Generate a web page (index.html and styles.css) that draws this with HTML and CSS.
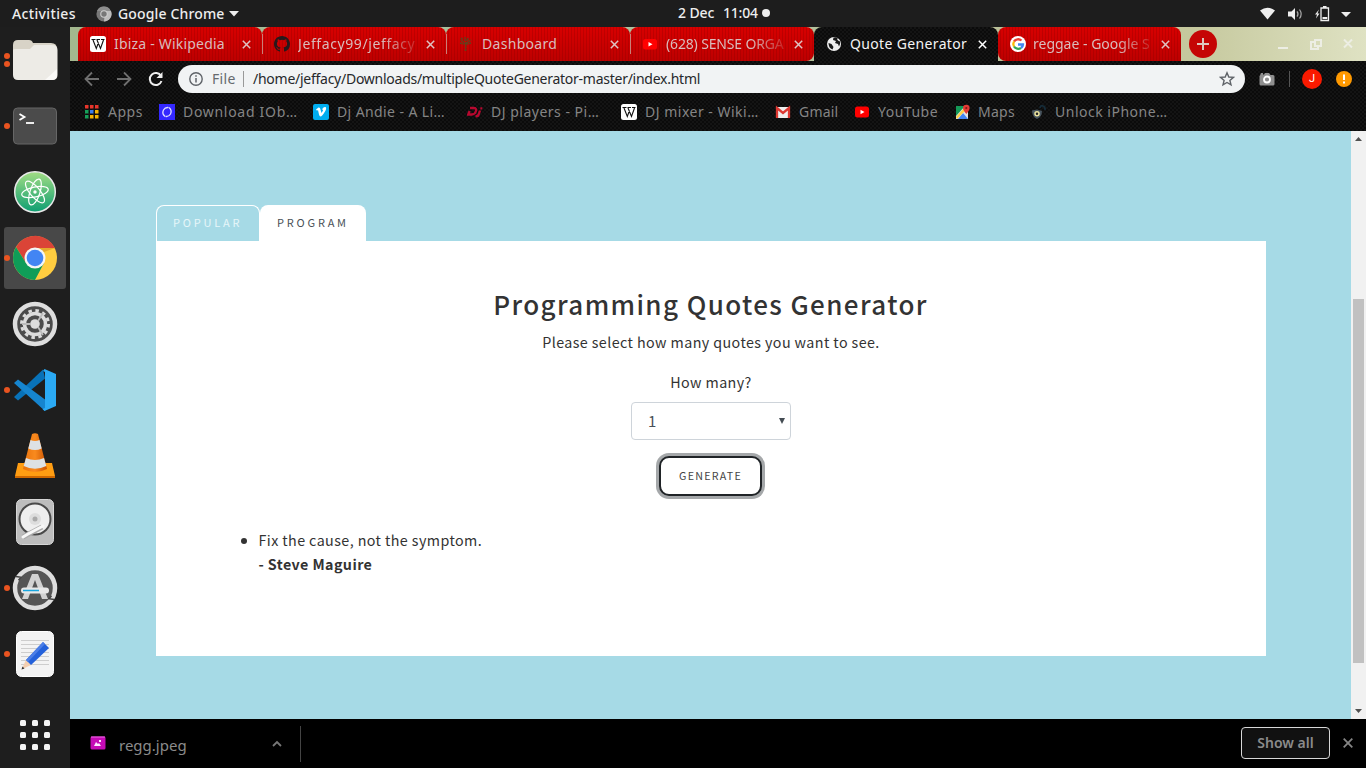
FILE: index.html
```html
<!DOCTYPE html>
<html lang="en">
<head>
<meta charset="utf-8">
<title>Quote Generator</title>
<link rel="stylesheet" href="styles.css">
</head>
<body>
<header class="topbar">
  <span class="activities">Activities</span>
  <svg class="app-logo" width="16" height="16" viewBox="0 0 16 16"><circle cx="8" cy="8" r="7.6" fill="#777"/><path d="M1 5a7.6 7.6 0 0 1 13.8 0H8z" fill="#8d8d8d"/><path d="M8 15.5A7.6 7.6 0 0 0 15 5H9z" fill="#bdbdbd"/><circle cx="8" cy="8" r="3.8" fill="#ccc"/><circle cx="8" cy="8" r="2.7" fill="#777"/></svg>
  <span class="app-name">Google Chrome</span>
  <svg class="app-caret" width="10" height="6"><path d="M0 0h10L5 5.5z" fill="#eee"/></svg>
  <span class="clock"><span class="date">2 Dec</span><span class="time">11:04</span><i class="notice"></i></span>
  <svg class="tray" width="94" height="18" viewBox="0 0 94 18" fill="#eee"><path d="M1 5.500Q8.500 0 16 5.500L8.500 14.500z"/><path d="M29 6.500h3.500L36 3v12l-3.500-3.500H29z"/><path d="M38 6.300q2 2.700 0 5.400M40.500 4.500q3.300 4.500 0 9" fill="none" stroke="#aaa" stroke-width="1.200"/><path d="M60 4.500l-4 5h2l-1 4 3.500-5h-2z"/><path d="M62 3h7.500v12.500H62z" fill="none" stroke="#eee" stroke-width="1.300"/><path d="M64 1h3.500v2H64zM63.500 12h4.800v2h-4.800zM82 7h10l-5 5z"/></svg>
</header>
<main class="desktop">
  <nav class="dock">
    <div class="dock-item"><i class="run-dots"><b></b><b></b></i>
      <svg width="46" height="42" viewBox="0 0 46 42"><path d="M1 6q0-5 5-5h11q3 0 4 3h18q6 0 6 6v20H1z" fill="#d8d3c7"/><path d="M1 11q0-1 3-1h14l4-4h18q5.500 0 5.500 5v25q0 5-5 5H6q-5 0-5-5z" fill="#edebe6"/><path d="M45 30v6q0 5-6 5h-6z" fill="#faf9f7"/></svg></div>
    <div class="dock-item"><i class="run-dots"><b></b></i>
      <svg width="44" height="38" viewBox="0 0 44 38"><rect x=".5" y="1" width="43" height="36" rx="4" fill="#4b4b4b" stroke="#666"/><path d="M6.500 7l5 3-5 3" fill="none" stroke="#fff" stroke-width="1.800"/><path d="M13 16h8" stroke="#fff" stroke-width="1.800"/></svg></div>
    <div class="dock-item">
      <svg width="44" height="44" viewBox="0 0 44 44"><defs><linearGradient id="atom" x2="0" y2="1"><stop stop-color="#a2dd84"/><stop offset="1" stop-color="#0d9e72"/></linearGradient></defs><circle cx="22" cy="22" r="20.300" fill="url(#atom)" stroke="#e8e8e8" stroke-width="1.500"/><g fill="none" stroke="#fff" stroke-width="1.200"><ellipse cx="22" cy="22" rx="13.500" ry="5" transform="rotate(-12 22 22)"/><ellipse cx="22" cy="22" rx="13.500" ry="5" transform="rotate(50 22 22)"/><ellipse cx="22" cy="22" rx="13.500" ry="5" transform="rotate(108 22 22)"/></g><circle cx="22" cy="22" r="1.700" fill="#fff"/></svg></div>
    <div class="dock-item focused"><i class="run-dots"><b></b></i>
      <svg width="46" height="46" viewBox="0 0 46 46"><circle cx="23" cy="23" r="22" fill="#ffcd40"/><path d="M4 12A22 22 0 0 1 43 13H23L14 28z" fill="#db4437"/><path d="M4 12A22 22 0 0 0 23 45l9-17-9 5-9-5z" fill="#0f9d58"/><path d="M23 13h20l-11 4z" fill="#e5a92d"/><circle cx="23" cy="23" r="10.500" fill="#f5f5f5"/><circle cx="23" cy="23" r="8.300" fill="#4285f4"/></svg></div>
    <div class="dock-item">
      <svg width="46" height="46" viewBox="0 0 46 46"><circle cx="23" cy="23" r="20" fill="#4b4b4b" stroke="#dedede" stroke-width="4.500"/><circle cx="23" cy="23" r="13.500" fill="none" stroke="#dcdcdc" stroke-width="3" stroke-dasharray="3.500 3.568"/><circle cx="23" cy="23" r="10.500" fill="none" stroke="#dcdcdc" stroke-width="3.500"/><circle cx="23" cy="23" r="4.800" fill="#dcdcdc"/><path d="M10 23h9M26 20l5-8M26 26l5 8" stroke="#bbb" stroke-width="1.800"/></svg></div>
    <div class="dock-item"><i class="run-dots"><b></b></i>
      <svg width="44" height="44" viewBox="0 0 44 44"><path d="M5 32.500L1 29 30 1.500l2 9z" fill="#0872b8"/><path d="M1 15l4-3.500L34 33l-2 10z" fill="#1685cf"/><path d="M31.500 1L43 6v32l-11.500 5-2-2 2.500-1V4l-2-1z" fill="#2baaf4"/></svg></div>
    <div class="dock-item">
      <svg width="42" height="46" viewBox="0 0 42 46"><defs><linearGradient id="cone"><stop stop-color="#e8720c"/><stop offset=".5" stop-color="#f98a1e"/><stop offset="1" stop-color="#c95100"/></linearGradient></defs><path d="M4 30h34l3 13v2H1v-2z" fill="#ff9d12"/><path d="M1 43h40v2H1z" fill="#cf6800"/><path d="M18 1q3-1.500 6 0l9 35q-12 6-24 0z" fill="url(#cone)"/><path d="M16.500 7q4.500 2 9 0l2.200 8.500q-6.700 3-13.400 0zM12 25q9 4 18 0l2.300 8q-11.300 5.500-22.600 0z" fill="#dde1e4"/></svg></div>
    <div class="dock-item">
      <svg width="38" height="46" viewBox="0 0 38 46"><rect x=".5" y=".5" width="37" height="45" rx="5" fill="#bdbdbd" stroke="#d6d6d6"/><circle cx="19" cy="20" r="15.500" fill="#eee" stroke="#4a4a4a" stroke-width="2"/><circle cx="19" cy="20" r="6" fill="#ddd"/><circle cx="19" cy="20" r="2.500" fill="#aaa"/><path d="M7 38l19-10" stroke="#aaa" stroke-width="5"/><path d="M7 38l5-3 15-8" stroke="#f7f7f7" stroke-width="3" fill="none" stroke-linecap="round"/></svg></div>
    <div class="dock-item"><i class="run-dots"><b></b></i>
      <svg width="46" height="46" viewBox="0 0 46 46"><circle cx="23" cy="23" r="20" fill="#555" stroke="#dedede" stroke-width="4.500"/><path d="M4 11.500l5 .8-2.500 3M42 34.500l-5-.8 2.500-3" stroke="#444" stroke-width="1.500" fill="none"/><path d="M10 34L20 9h6l10 25h-6l-7-19-7 19z" fill="#d2d2d2"/><rect x="9" y="22.500" width="28" height="6" rx="3" fill="#e8e8e8"/><path d="M11 25.500h16" stroke="#19a6df" stroke-width="1.500"/></svg></div>
    <div class="dock-item"><i class="run-dots"><b></b></i>
      <svg width="38" height="46" viewBox="0 0 38 46"><rect x=".5" y=".5" width="37" height="45" rx="5" fill="#f3f3f3" stroke="#fff"/><path d="M5 9.500h28M5 13.500h28M5 17.500h28M5 21.500h28M5 25.500h28M5 29.500h28M5 33.500h28" stroke="#cdcdcd"/><path d="M5.500 38.500L10 29l5 5z" fill="#f3ceb0"/><path d="M5.500 38.500l1-3 2 2z" fill="#333"/><path d="M10 29l17-18 6 6-18 17z" fill="#2461da"/><path d="M10 29l17-18 2 2-17 18z" fill="#4b7ee7"/></svg></div>
    <div class="dock-apps"><b></b><b></b><b></b><b></b><b></b><b></b><b></b><b></b><b></b></div>
  </nav>
  <section class="browser">
    <div class="tabstrip">
      <div class="tab"><svg class="fav" viewBox="0 0 16 16"><rect width="16" height="16" rx="2.500" fill="#fff"/><path d="M1.500 3.500h4M6.500 3.500h3.500M11 3.500h3.500M3 4l3.300 8.500L8.500 6.500M7 4l3.500 8.500L13.500 4" fill="none" stroke="#111" stroke-width="1.100"/></svg><span class="title t1">Ibiza - Wikipedia</span><svg class="x" viewBox="0 0 9 9"><path d="M.8.8l7.400 7.400M8.200.8L.8 8.200"/></svg></div>
      <div class="tab"><svg class="fav" viewBox="0 0 16 16"><path fill="#26191b" d="M8 0C3.580 0 0 3.580 0 8c0 3.540 2.290 6.530 5.470 7.590.4.070.55-.17.55-.38v-1.490c-2.230.49-2.700-.95-2.700-.95-.36-.92-.89-1.170-.89-1.170-.73-.5.060-.49.060-.49.800.060 1.230.83 1.230.83.720 1.220 1.870.87 2.330.66.070-.52.280-.87.510-1.070-1.780-.2-3.640-.89-3.640-3.950 0-.87.310-1.590.82-2.150-.08-.2-.36-1.020.08-2.120 0 0 .67-.21 2.200.82a7.600 7.600 0 0 1 4 0c1.530-1.040 2.200-.82 2.200-.82.440 1.100.160 1.920.080 2.120.51.560.82 1.270.82 2.150 0 3.070-1.870 3.750-3.650 3.950.290.250.540.730.540 1.480v2.200c0 .21.150.46.550.38A8 8 0 0 0 16 8c0-4.420-3.580-8-8-8z"/></svg><span class="title fade t2">Jeffacy99/jeffacy</span><svg class="x" viewBox="0 0 9 9"><path d="M.8.8l7.400 7.400M8.200.8L.8 8.200"/></svg></div>
      <div class="tab"><svg class="fav" viewBox="0 0 16 16"><path d="M7.500 15l.5-9M8 8L3 4M8 7l5-3M7.500 5L7 1M2 7l4 1M13 7L9 8M3 2l2 2M10 2L9 5" stroke="#63401c" stroke-width="1.700" stroke-dasharray="2 .6" fill="none"/></svg><span class="title t3">Dashboard</span><svg class="x" viewBox="0 0 9 9"><path d="M.8.8l7.400 7.400M8.200.8L.8 8.200"/></svg></div>
      <div class="tab last-left"><svg class="fav" viewBox="0 0 16 16"><rect x="1" y="3" width="14" height="10.500" rx="2.500" fill="#f00"/><path d="M6.500 6v4.500l4-2.250z" fill="#fff"/></svg><span class="title fade t4">(628) SENSE ORGA</span><svg class="x" viewBox="0 0 9 9"><path d="M.8.8l7.400 7.400M8.200.8L.8 8.200"/></svg></div>
      <div class="tab active"><svg class="fav" viewBox="0 0 16 16"><circle cx="8" cy="8" r="7" fill="#eee"/><path d="M2.500 7l3 1 2 3-1 2.500q-4-1.500-4-6.500zM7.500 1.500L7 4l3 1-1 2 3 1 1 2.500q1.500-2 1-5l-2-1-1-1.500 1-1q-2-1.300-4-.5z" fill="#181818"/></svg><span class="title t5">Quote Generator</span><svg class="x" viewBox="0 0 9 9"><path d="M.8.8l7.400 7.400M8.200.8L.8 8.200"/></svg></div>
      <div class="tab only"><svg class="fav" viewBox="0 0 16 16"><circle cx="8" cy="8" r="8" fill="#fff"/><g fill="none" stroke-width="2.300"><path d="M11.500 4.500A5 5 0 0 0 4 5.500" stroke="#ea4335"/><path d="M4 5.500q-1.500 2.500 0 5" stroke="#fbbc05"/><path d="M4 10.500a5 5 0 0 0 7 1.500" stroke="#34a853"/><path d="M11 12q2-1.500 2-3.500H8" stroke="#4285f4"/></g></svg><span class="title fade t6">reggae - Google S</span><svg class="x" viewBox="0 0 9 9"><path d="M.8.8l7.400 7.400M8.200.8L.8 8.200"/></svg></div>
      <svg class="newtab" width="28" height="28" viewBox="0 0 28 28"><circle cx="14" cy="14" r="14" fill="#c50505"/><path d="M14 8v12M8 14h12" stroke="#ddc8c0" stroke-width="2"/></svg>
      <svg class="wincontrols" width="76" height="14" viewBox="0 0 76 14" fill="none" stroke="#edeee4" stroke-width="2"><path d="M0 11h10M36 5h-3v7h7v-3M37 3h6v6h-6zM66 2.500l8 8M74 2.500l-8 8"/></svg>
    </div>
    <div class="toolbar">
      <svg class="navicons" width="80" height="18" viewBox="0 0 80 18" fill="none" stroke="#6f6f6f" stroke-width="1.800"><path d="M15 9H2M8 2.500L1.500 9 8 15.500M33 9h13M40 2.500L46.500 9 40 15.500"/><path d="M77 6a6 6 0 1 0 .5 5" stroke="#eee" stroke-width="2"/><path d="M78.500 2v6h-6z" fill="#eee" stroke="none"/></svg>
      <div class="omnibox">
        <svg width="14" height="14" viewBox="0 0 14 14"><circle cx="7" cy="7" r="6.200" fill="none" stroke="#5f6368" stroke-width="1.400"/><path d="M7 6v4.500M7 3.300v1.500" stroke="#5f6368" stroke-width="1.500"/></svg>
        <span class="scheme">File</span><span class="url">/home/jeffacy/Downloads/multipleQuoteGenerator-master/index.html</span>
        <svg class="star" width="16" height="16" viewBox="0 0 16 16"><path d="M8 1.800l1.800 4.200 4.600.4-3.500 3 1.100 4.500L8 11.500l-4 2.400 1.100-4.500-3.500-3L6.200 6z" fill="none" stroke="#5f6368" stroke-width="1.400"/></svg>
      </div>
      <svg class="camera" width="16" height="14" viewBox="0 0 16 14"><path d="M1 3.500L2 1h2v1.500h1L6 1h4l1.500 2H14q1.500 0 1.500 1.500V12q0 1.500-1.500 1.500H2Q.5 13.500.5 12V4z" fill="#8f8f8f"/><circle cx="8" cy="7.500" r="3" fill="none" stroke="#fff" stroke-width="1.800"/></svg>
      <i class="rule"></i><span class="avatar">J</span>
      <svg class="warning" width="16" height="16" viewBox="0 0 16 16"><circle cx="8" cy="8" r="8" fill="#ff9900"/><path d="M8 3.500v5.500M8 10.500v2" stroke="#fff" stroke-width="2"/></svg>
    </div>
    <div class="bookmarks">
      <div class="bm b1"><svg viewBox="0 0 16 16"><path d="M1 1h3.500v3.500H1zM6 1h3.500v3.500H6zM11 1h3.500v3.500H11z" fill="#e8352b"/><path d="M1 6h3.500v3.500H1z" fill="#16a05a"/><path d="M6 6h3.500v3.500H6z" fill="#3b7ded"/><path d="M11 6h3.500v3.500H11z" fill="#f5b400"/><path d="M1 11h3.500v3.500H1z" fill="#16a05a"/><path d="M6 11h3.500v3.500H6zM11 11h3.500v3.500H11z" fill="#f5b400"/></svg><span>Apps</span></div>
      <div class="bm b2"><svg viewBox="0 0 16 16"><path d="M0 0h16v16H0z" fill="#3428ff"/><path d="M6.500 12.700Q2.500 10 4.500 6 6 3.300 9 3.500M9.500 3.300q4 2.700 2 6.700-1.500 2.700-4.500 2.500" fill="none" stroke="#ddf" stroke-width="1.300"/></svg><span>Download IOb…</span></div>
      <div class="bm b3"><svg viewBox="0 0 16 16"><rect width="16" height="16" rx="2" fill="#00adef"/><path d="M3 5.500l2.500-2q1.500-.5 2 2l1 3.500 1.500-2.500q.5-1-1-1 1-3 3.500-2.500 1.500 1-.5 4.500-3 5-4.500 5-1 0-1.500-2L5 6l-1 .7z" fill="#fff"/></svg><span>Dj Andie - A Li…</span></div>
      <div class="bm b4"><svg viewBox="0 0 16 16"><path d="M3 4h3.500q3.500 0 2.300 3.500-1 3-4 3H1.200L2.600 7M13 6.500l-1.300 4q-.7 2-3.200 1.700M13.300 4.300h2" fill="none" stroke="#b8082f" stroke-width="2.300"/></svg><span>DJ players - Pi…</span></div>
      <div class="bm b5"><svg viewBox="0 0 16 16"><rect width="16" height="16" rx="2.500" fill="#fff"/><path d="M1.500 3.500h4M6.500 3.500h3.500M11 3.500h3.500M3 4l3.300 8.500L8.500 6.500M7 4l3.500 8.500L13.500 4" fill="none" stroke="#111" stroke-width="1.100"/></svg><span>DJ mixer - Wiki…</span></div>
      <div class="bm b6"><svg viewBox="0 0 16 16"><path d="M1 3h14v11H1z" fill="#eee"/><path d="M2 14V4l6 5 6-5v10" fill="none" stroke="#dc3832" stroke-width="2.300"/></svg><span>Gmail</span></div>
      <div class="bm b7"><svg viewBox="0 0 16 16"><rect x="1" y="2.500" width="14" height="11" rx="2.500" fill="#f00"/><path d="M6.500 5.800v4.400l4-2.200z" fill="#fff"/></svg><span>YouTube</span></div>
      <div class="bm b8"><svg viewBox="0 0 16 16"><path d="M2 2h12v13H2z" fill="#dfe2e5"/><path d="M2 2h9L2 12z" fill="#159957"/><path d="M4 15l5-6 5 6z" fill="#4285f4"/><path d="M2 13l8-9 2 2-9 9z" fill="#ffd047"/><path d="M9 4a3.300 3.300 0 0 1 6.600 0q0 2-3.300 6Q9 6 9 4z" fill="#e33b35"/><circle cx="12.300" cy="4" r="1.100" fill="#841717"/></svg><span>Maps</span></div>
      <div class="bm b9"><svg viewBox="0 0 16 16"><path d="M9 4q.5-3 3-2 2.500 1 2 4" fill="none" stroke="#152b38" stroke-width="1.800"/><path d="M1 6.500l5-1 5 1.500q0 6-5 8Q1 13 1 6.500z" fill="#47545e"/><circle cx="6" cy="9.800" r="2" fill="#222" stroke="#ece39d" stroke-width="1.500"/></svg><span>Unlock iPhone…</span></div>
    </div>
    <div class="viewport">
      <div class="page">
        <div class="page-tabs"><span class="ptab popular">POPULAR</span><span class="ptab program">PROGRAM</span></div>
        <div class="panel">
          <h1>Programming Quotes Generator</h1>
          <p class="lead">Please select how many quotes you want to see.</p>
          <label class="many">How many?</label>
          <div class="select"><span>1</span><svg width="6" height="6"><path d="M0 0h6L3 6z" fill="#444c53"/></svg></div>
          <button class="generate">GENERATE</button>
          <ul class="quotes"><li><span class="quote">Fix the cause, not the symptom.</span><br><strong>- Steve Maguire</strong></li></ul>
        </div>
      </div>
      <div class="scrollbar"><svg width="7" height="4"><path d="M0 4h7L3.500 0z" fill="#505050"/></svg><i class="thumb"></i><svg width="7" height="4"><path d="M0 0h7L3.500 4z" fill="#505050"/></svg></div>
    </div>
    <footer class="downloads">
      <svg class="file" width="16" height="14" viewBox="0 0 16 14"><rect x=".5" y=".5" width="15" height="13" rx="1.500" fill="#c60bb6"/><path d="M1 1h14" stroke="#ef6ce5"/><path d="M4 10l2-4 2 2 1-1 2 3zM9 4h2v2H9z" fill="#ffe5ff"/></svg>
      <span class="filename">regg.jpeg</span>
      <svg class="chev" width="10" height="7"><path d="M1 6l4-4 4 4" fill="none" stroke="#777" stroke-width="1.800"/></svg>
      <i class="dl-rule"></i>
      <span class="showall">Show all</span>
      <svg class="dl-x" width="10" height="10"><path d="M.7.7l8.600 8.600M9.300.7L.7 9.300" stroke="#858585" stroke-width="1.800"/></svg>
    </footer>
  </section>
</main>
</body>
</html>
```
FILE: styles.css
```css
* { box-sizing: border-box; }
body { margin: 0; width: 1366px; height: 768px; overflow: hidden; background: #1d1d1d; font: 14px/20px "Noto Sans", sans-serif; display: flex; flex-direction: column; }
svg { display: block; flex: none; }
span { white-space: nowrap; }

.topbar { height: 27px; flex: none; display: flex; align-items: center; color: #eee; background: #1d1d1d; position: relative; font-weight: 500; }
.activities { margin-left: 12px; width: 84px; letter-spacing: .35px; }
.app-name { margin-left: 6px; width: 107px; letter-spacing: .15px; }
.app-caret { margin-left: 4px; }
.clock { position: absolute; left: 678px; top: 3px; display: flex; align-items: center; }
.date { width: 45px; letter-spacing: -.1px; }
.time { width: 39px; letter-spacing: -.2px; }
.notice { width: 8px; height: 8px; border-radius: 50%; background: #eee; }
.tray { margin-left: auto; margin-right: 13px; }

.desktop { display: flex; flex: 1; min-height: 0; }
.dock { width: 70px; background: #1e1e1e; display: flex; flex-direction: column; }
.dock-item { height: 66px; width: 70px; display: flex; align-items: center; justify-content: center; position: relative; }
.focused { height: 62px; width: 62px; margin: 2px 4px; background: #484848; border-radius: 3px; }
.run-dots { position: absolute; left: 4px; display: flex; flex-direction: column; gap: 2px; }
.run-dots b { width: 6px; height: 6px; border-radius: 50%; background: #ea5420; }
.focused .run-dots { left: 0; }
.dock-apps { margin-top: auto; height: 66px; display: grid; grid-template-columns: repeat(3, 6px); gap: 6px; place-content: center; }
.dock-apps b { width: 6px; height: 6px; border-radius: 1.5px; background: #f5f5f5; }

.browser { width: 1296px; display: flex; flex-direction: column; background-color: #141414; background-image: linear-gradient(45deg, #0b0b0b 25%, transparent 25%, transparent 75%, #0b0b0b 75%), linear-gradient(45deg, #0b0b0b 25%, transparent 25%, transparent 75%, #0b0b0b 75%); background-size: 4px 4px; background-position: 0 0, 2px 2px; }
.tabstrip { height: 34px; flex: none; display: flex; align-items: center; padding-left: 8px; background: linear-gradient(90deg, #a3b88e 0, #a9c3a1 450px, #b9bf98 900px, #c5c89d 1120px, #dfe2c3 1296px); }
.tab { width: 184px; height: 34px; flex: none; display: flex; align-items: center; padding-left: 12px; position: relative; border-radius: 8px 8px 0 0; color: #d9bcbc; background: repeating-linear-gradient(90deg, #0000 0 2px, #70000038 2px 3px), linear-gradient(#d80000, #bd0000); }
.tab:not(.active):not(.only):not(.last-left)::after { content: ""; position: absolute; right: -1px; top: 7px; width: 1px; height: 20px; background: #c98078; z-index: 1; }
.fav { width: 16px; height: 16px; }
.title { width: 120px; margin-left: 8px; }
.fade { -webkit-mask-image: linear-gradient(90deg, #000 70%, #0003 98%); mask-image: linear-gradient(90deg, #000 70%, #0003 98%); }
.t1 { letter-spacing: .2px; }
.t2 { letter-spacing: .6px; }
.t3 { letter-spacing: .3px; }
.t4 { letter-spacing: -.15px; }
.t5 { letter-spacing: .35px; }
.x { width: 9px; height: 9px; margin-left: 8px; fill: none; stroke: #dfc4c4; stroke-width: 1.5; }
.active { color: #f4f4f4; background-color: #141414; background-image: linear-gradient(45deg, #0b0b0b 25%, transparent 25%, transparent 75%, #0b0b0b 75%), linear-gradient(45deg, #0b0b0b 25%, transparent 25%, transparent 75%, #0b0b0b 75%); background-size: 4px 4px; background-position: 0 0, 2px 2px; }
.active .x { stroke: #fff; }
.last-left { border-bottom-right-radius: 8px; }
.only { width: 183px; border-bottom-left-radius: 8px; }
.only .title { margin-left: 7px; }
.newtab { margin-left: 8px; }
.wincontrols { margin-left: 61px; }

.toolbar { height: 36px; flex: none; display: flex; align-items: center; padding-left: 14px; }
.omnibox { width: 1067px; height: 28px; margin-left: 14px; border-radius: 14px; background: #f1f3f4; padding: 0 10px 0 11px; display: flex; align-items: center; color: #26282b; }
.scheme { margin-left: 9px; width: 32px; color: #666a6e; height: 16px; line-height: 16px; border-right: 1px solid #999; letter-spacing: .3px; }
.url { margin-left: 9px; letter-spacing: -.26px; }
.star { margin-left: auto; }
.camera { margin-left: 14px; }
.rule { width: 1px; height: 16px; margin-left: 14px; background: #555; }
.avatar { margin-left: 12px; width: 20px; height: 20px; border-radius: 50%; background: #fa1a00; color: #fff; text-align: center; font: 11px/20px Roboto, sans-serif; }
.warning { margin-left: 14px; }

.bookmarks { height: 34px; flex: none; display: flex; align-items: center; padding: 0 0 4px 14px; color: #858585; letter-spacing: .5px; }
.bm { display: flex; align-items: center; flex: none; }
.bm svg { width: 16px; height: 16px; }
.bm span { margin-left: 8px; }
.b1 { width: 75px; }
.b2 { width: 154px; letter-spacing: .7px; }
.b3, .b4, .b5 { width: 154px; }
.b3 { letter-spacing: .4px; }
.b6 { width: 79px; letter-spacing: .2px; }
.b7 { width: 100px; }
.b8 { width: 77px; letter-spacing: .25px; }

.viewport { height: 588px; flex: none; display: flex; background: #a6dae6; }
.page { width: 1281px; padding: 74px 85px 0 86px; font-family: "Noto Sans CJK JP", "Noto Sans", sans-serif; color: #333; }
.page-tabs { display: flex; height: 36px; }
.ptab { height: 36px; font-size: 11px; letter-spacing: 2.8px; border-radius: 8px 8px 0 0; }
.popular { width: 104px; padding-left: 16px; line-height: 33px; border: 1px solid #fff; border-bottom: 0; color: #e7f6f9; }
.program { width: 106px; padding-left: 17px; line-height: 35px; background: #fff; color: #495057; }
.panel { height: 415px; background: #fff; display: flex; flex-direction: column; align-items: center; }
h1 { margin: 46px 1px 0 0; font-size: 26px; line-height: 34px; font-weight: 500; letter-spacing: 1.4px; white-space: nowrap; }
.lead { margin: 9px 0 0; font-size: 14.3px; line-height: 24px; letter-spacing: .41px; }
.many { margin-top: 16px; font-size: 14.3px; line-height: 24px; letter-spacing: .41px; }
.select { width: 160px; height: 38px; margin-top: 8px; border: 1px solid #ced4da; border-radius: 4px; display: flex; align-items: center; justify-content: space-between; padding: 0 5px 0 16px; color: #495057; font-size: 15px; }
.generate { width: 103px; height: 40px; margin: 16px 1px 0 0; padding: 0; border: 2px solid #202427; border-radius: 10px; box-shadow: 0 0 0 3px #a5a8aa; background: #fff; color: #444; font: 10.7px/20px "Noto Sans CJK JP", sans-serif; letter-spacing: 1.25px; }
.quotes { align-self: flex-start; margin: 32px 0 0 102.5px; padding: 0; font-size: 14.3px; line-height: 24px; letter-spacing: .41px; }

.scrollbar { width: 15px; background: #f1f1f1; display: flex; flex-direction: column; align-items: center; padding: 6px 0; }
.thumb { width: 11px; height: 364px; margin: 158px 0 auto 0; background: #c1c1c1; }

.downloads { flex: 1; background: #000; display: flex; align-items: center; padding: 1px 13px 0 20px; color: #8b8b8b; }
.file { margin-bottom: 2px; }
.filename { margin-left: 13px; width: 153px; font-size: 15px; padding-top: 1px; }
.chev { margin-bottom: 2px; }
.dl-rule { width: 1px; height: 36px; margin-left: 18px; background: #444; }
.showall { margin-left: auto; width: 89px; height: 32px; margin-top: -2px; border: 1px solid #d8d8d8; border-radius: 4px; background: #111; text-align: center; line-height: 30px; font-weight: 600; }
.dl-x { margin: -2px 0 0 13px; }
```
